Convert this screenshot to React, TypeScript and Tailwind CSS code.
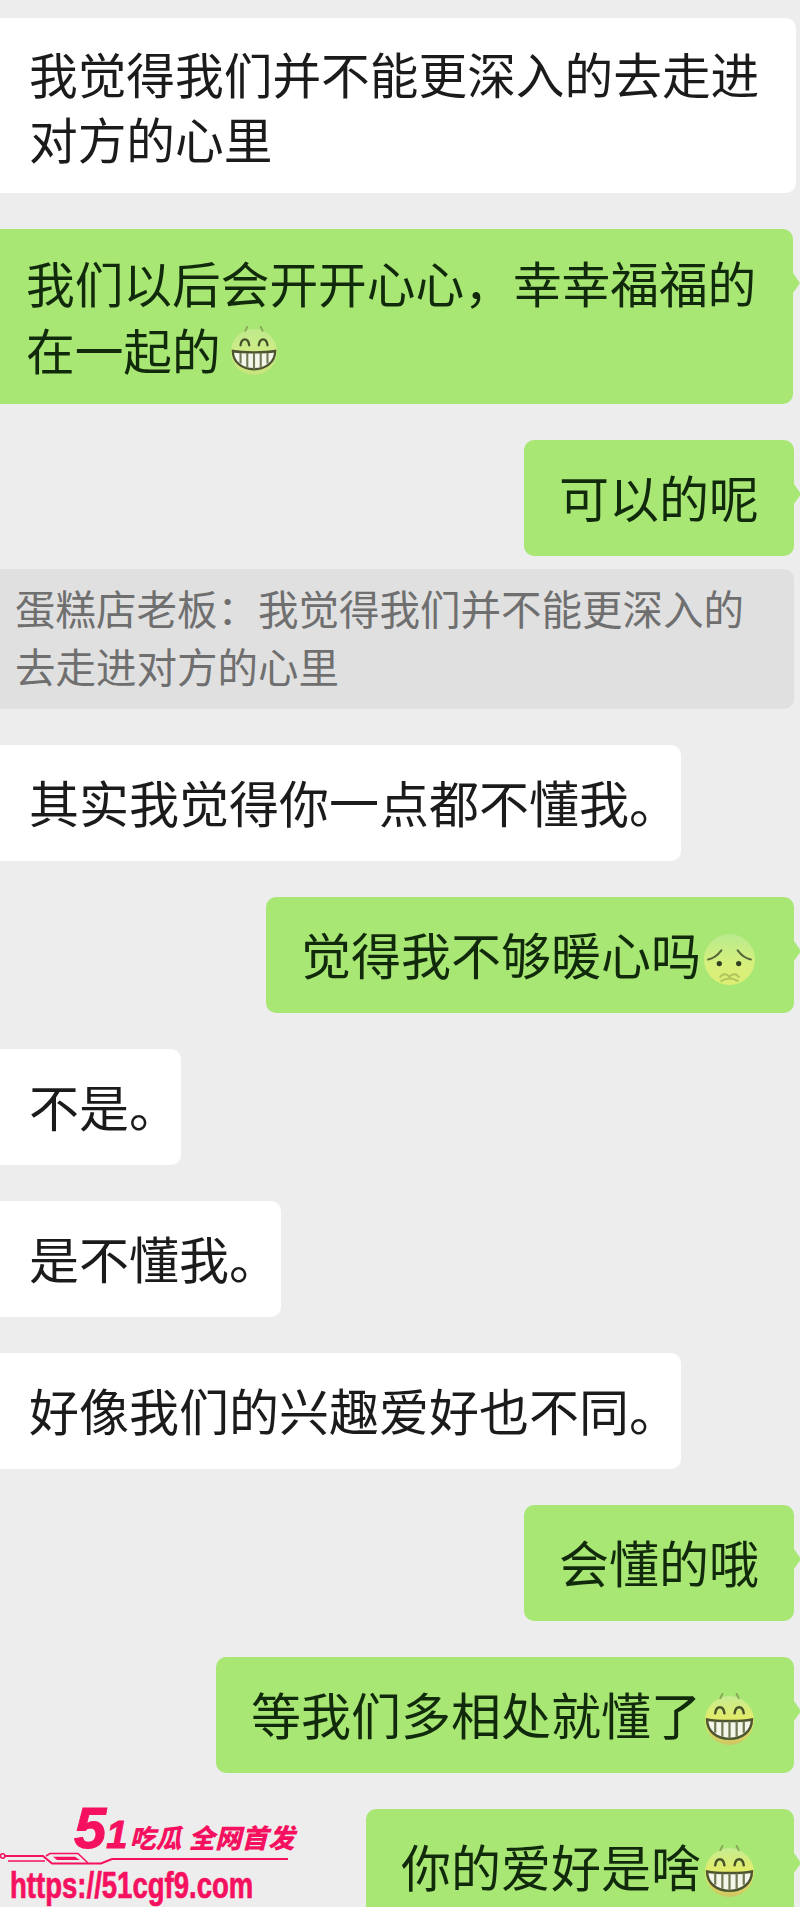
import React from 'react';

const cjk = "font-['Noto_Sans_CJK_SC','Noto_Sans',sans-serif]";

function GrinEmoji({ className = '', pale = false }: { className?: string; pale?: boolean }) {
  const id = pale ? 'grinPale' : 'grinFace';
  return (
    <svg viewBox="0 0 52 52" className={className}>
      <defs>
        <linearGradient id={id} x1="0" y1="0" x2="0" y2="1">
          <stop offset="0%" stopColor={pale ? '#bfea8c' : '#c6ec92'} />
          <stop offset="45%" stopColor={pale ? '#cdeb86' : '#e2ec6a'} />
          <stop offset="100%" stopColor={pale ? '#c8e47c' : '#cfc662'} />
        </linearGradient>
      </defs>
      <circle cx="26" cy="27" r="24" fill={`url(#${id})`} />
      <path d="M17 5 L19 1 M35 5 L33 1" stroke="#8aa85a" strokeWidth="2" strokeLinecap="round" />
      <path d="M12 20 C13 12 20 12 21 20" fill="none" stroke="#46512c" strokeWidth="2.4" strokeLinecap="round" />
      <path d="M31 20 C32 12 39 12 40 20" fill="none" stroke="#46512c" strokeWidth="2.4" strokeLinecap="round" />
      <path d="M4 26 C14 28 38 28 48 26 C48 38 38 45 26 45 C14 45 4 38 4 26 Z" fill="#f4f6ea" stroke="#4d5430" strokeWidth="2.4" />
      <path d="M12 28 V39 M19 28 V43 M26 28 V45 M33 28 V43 M40 28 V39" stroke="#707a55" strokeWidth="2.2" />
    </svg>
  );
}

function WorriedEmoji({ className = '' }: { className?: string }) {
  return (
    <svg viewBox="0 0 52 52" className={className}>
      <defs>
        <linearGradient id="worriedFace" x1="0" y1="0" x2="0" y2="1">
          <stop offset="0%" stopColor="#b9ea8e" />
          <stop offset="60%" stopColor="#d6f07c" />
          <stop offset="100%" stopColor="#dcee74" />
        </linearGradient>
      </defs>
      <circle cx="26" cy="26" r="25" fill="url(#worriedFace)" />
      <path d="M5 26 C10 25 15 21 18 17" fill="none" stroke="#56653a" strokeWidth="2" strokeLinecap="round" />
      <path d="M47 26 C42 25 37 21 34 17" fill="none" stroke="#56653a" strokeWidth="2" strokeLinecap="round" />
      <circle cx="16" cy="30" r="2.6" fill="#33401f" />
      <circle cx="35" cy="30" r="2.6" fill="#33401f" />
      <path d="M17 43 C20 39 24 40 26 43 C28 40 32 39 35 43 M18 47 C23 44 29 44 34 47" fill="none" stroke="#b0c45c" strokeWidth="2" strokeLinecap="round" />
    </svg>
  );
}

function Left({ children }: { children: React.ReactNode }) {
  return (
    <div className="mt-[35.5px] w-fit rounded-r-[10px] bg-white pb-[28px] pl-[29px] pr-[2px] pt-[24px] text-[50px] leading-[64.5px] text-[#1b1b1b]">
      {children}
    </div>
  );
}

function Tail() {
  return <span className="absolute right-[-7px] top-[44px] h-0 w-0 border-y-[10px] border-l-[7px] border-y-transparent border-l-[#a9e775]" />;
}

function Right({ children }: { children: React.ReactNode }) {
  return (
    <div className="relative ml-auto mr-[6px] mt-[35.5px] flex w-fit items-center rounded-[10px] bg-[#a9e775] pb-[28px] pl-[35px] pt-[24px] text-[50px] leading-[64.5px] text-[#122a0c]">
      {children}
      <Tail />
    </div>
  );
}

export default function App() {
  return (
    <div className={`relative h-[1907px] w-[800px] overflow-hidden bg-[#ededed] ${cjk}`}>
      <div className="flex flex-col pt-[18px]">
        <div className="mr-[4px] rounded-r-[10px] bg-white pb-[23px] pl-[29px] pr-[20px] pt-[23px] text-[48.7px] leading-[64.5px] text-[#1b1b1b]">
          我觉得我们并不能更深入的去走进
          <br />
          对方的心里
        </div>

        <div className="relative mr-[7px] mt-[36px] rounded-r-[10px] bg-[#a9e775] pb-[21px] pl-[26px] pr-[20px] pt-[20px] text-[48.7px] leading-[67px] text-[#122a0c]">
          我们以后会开开心心{'\uFF0C'}幸幸福福的
          <br />
          <span className="inline-flex items-center">
            在一起的
            <GrinEmoji pale className="ml-[8px] mt-[2px] h-[50px] w-[50px]" />
          </span>
          <Tail />
        </div>

        <Right>
          <span className="pr-[35px]">可以的呢</span>
        </Right>

        <div className="mr-[6px] mt-[13px] rounded-r-[10px] bg-[#e0e0e0] pb-[14px] pl-[15px] pr-[20px] pt-[10px] text-[40.5px] leading-[58px] text-[#6f6f6f]">
          蛋糕店老板{'\uFF1A'}我觉得我们并不能更深入的
          <br />
          去走进对方的心里
        </div>

        <Left>其实我觉得你一点都不懂我。</Left>

        <Right>
          觉得我不够暖心吗
          <WorriedEmoji className="ml-[2px] mr-[38px] h-[53px] w-[53px] translate-y-[7px]" />
        </Right>

        <Left>不是。</Left>
        <Left>是不懂我。</Left>
        <Left>好像我们的兴趣爱好也不同。</Left>

        <Right>
          <span className="pr-[35px]">会懂的哦</span>
        </Right>

        <Right>
          等我们多相处就懂了
          <GrinEmoji className="ml-[2px] mr-[38px] h-[53px] w-[53px] translate-y-[7px]" />
        </Right>

        <Right>
          你的爱好是啥
          <GrinEmoji className="ml-[2px] mr-[38px] h-[53px] w-[53px] translate-y-[7px]" />
        </Right>
      </div>

      <div className="absolute bottom-0 left-0 h-[107px] w-[300px] text-[#f5115f]">
        <div className="absolute left-[74px] top-[0px] flex items-baseline italic">
          <span className="font-['Liberation_Sans',sans-serif] text-[58px] leading-[56px] font-bold [-webkit-text-stroke:1px_#f5115f]">5</span>
          <span className="font-['Liberation_Sans',sans-serif] text-[38px] leading-[56px] font-bold [-webkit-text-stroke:1px_#f5115f]">1</span>
          <span className="ml-[2px] text-[26px] leading-[56px] font-black">吃瓜</span>
          <span className="ml-[7px] text-[26.5px] leading-[56px] font-black">全网首发</span>
        </div>
        <svg viewBox="0 0 290 20" className="absolute left-0 top-[50px] h-[20px] w-[290px]">
          <g fill="none" stroke="#f5115f" strokeWidth="1.5">
            <circle cx="2.7" cy="6" r="2.2" />
            <path d="M5 6 H43 L52 13.5 H101 L112 9 H288" strokeWidth="2" />
            <path d="M8 11 H45" />
            <path d="M46 6 L50 3.5 H78 L88 13" />
          </g>
          <path d="M53 6.7 H75 L80 10 H57 Z" fill="#f5115f" />
        </svg>
        <div className="absolute left-[10px] top-[66px] origin-left scale-x-[0.765] font-['Liberation_Sans',sans-serif] text-[36px] leading-[40px] font-bold whitespace-nowrap [-webkit-text-stroke:0.7px_#f5115f]">
          https://51cgf9.com
        </div>
      </div>
    </div>
  );
}
